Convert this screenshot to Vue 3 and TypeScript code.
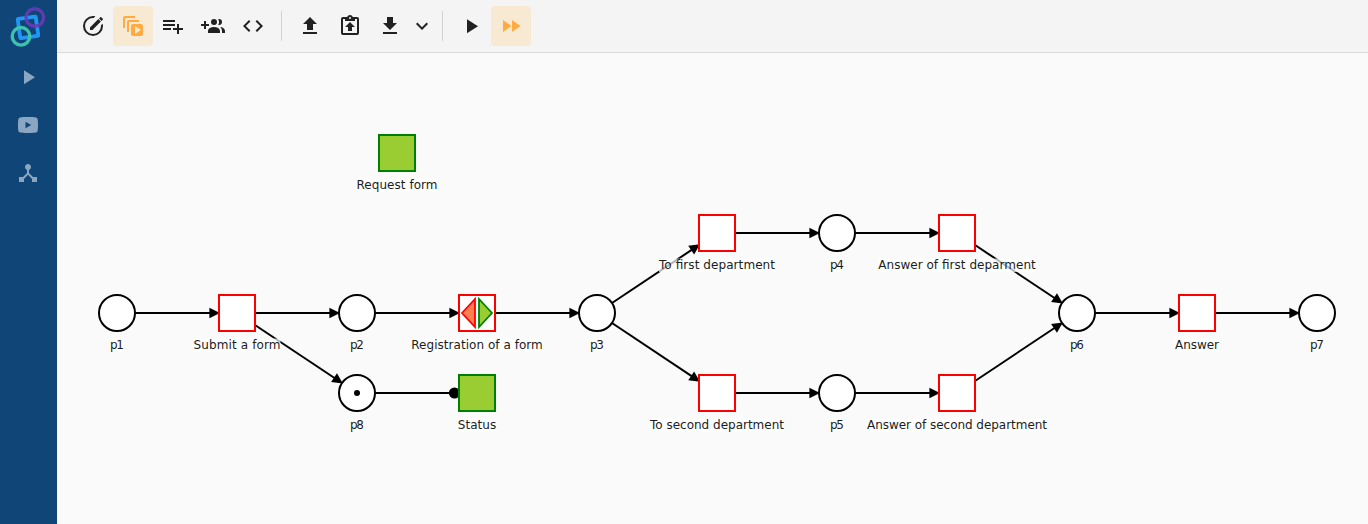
<script setup lang="ts">
type Kind = 'place' | 'transition' | 'form'

interface NetNode {
  id: string
  kind: Kind
  x: number
  y: number
  label: string
  width: number
  token?: boolean
  gate?: boolean
}

interface Arc {
  from: string
  to: string
  dot?: boolean
}

interface Tool {
  name: string
  path: string
  active?: boolean
  narrow?: boolean
}

const playPath = 'M8,5.14V19.14L19,12.14Z'

const menu: Tool[] = [
  { name: 'Run', path: playPath },
  {
    name: 'Videos',
    path: 'M12,4C16,4 18.6,4.1 19.9,4.45C21,4.75 21.5,5.4 21.7,6.5C21.9,7.8 22,9.8 22,12C22,14.2 21.9,16.2 21.7,17.5C21.5,18.6 21,19.25 19.9,19.55C18.6,19.9 16,20 12,20C8,20 5.4,19.9 4.1,19.55C3,19.25 2.5,18.6 2.3,17.5C2.1,16.2 2,14.2 2,12C2,9.8 2.1,7.8 2.3,6.5C2.5,5.4 3,4.75 4.1,4.45C5.4,4.1 8,4 12,4ZM9.5,8.8V15.2L15.2,12Z',
  },
  {
    name: 'Network',
    path: 'M17 16l-4-4V8.82C14.16 8.4 15 7.3 15 6c0-1.66-1.34-3-3-3S9 4.34 9 6c0 1.3.84 2.4 2 2.82V12l-4 4H3v5h5v-3.05l4-4.2 4 4.2V21h5v-5h-4z',
  },
]

const toolGroups: Tool[][] = [
  [
    {
      name: 'Edit',
      path: 'M12,20A8,8 0 0,0 20,12C20,11.76 20,11.5 19.97,11.28L21.6,9.65C21.87,10.4 22,11.19 22,12A10,10 0 1,1 12,2C12.81,2 13.6,2.13 14.35,2.4L12.72,4.03C12.5,4 12.24,4 12,4A8,8 0 0,0 12,20M19.78,3C19.61,3 19.42,3.07 19.28,3.2L18.06,4.41L20.57,6.9L21.78,5.7C22.04,5.44 22.04,5 21.78,4.75L20.25,3.2C20.11,3.07 19.95,3 19.78,3M17.35,5.12L9,13.5V16H11.5L19.87,7.62Z',
    },
    {
      name: 'Simulate',
      active: true,
      path: 'M4,2C2.89,2 2,2.89 2,4V14H4V4H14V2H4M8,6C6.89,6 6,6.89 6,8V18H8V8H18V6H8M12,10C10.89,10 10,10.89 10,12V20C10,21.1 10.9,22 12,22H20A2,2 0 0,0 22,20V12A2,2 0 0,0 20,10H12M14,12V20L20,16Z',
    },
    {
      name: 'Add to list',
      path: 'M2,16H10V14H2M18,14V10H16V14H12V16H16V20H18V16H22V14M14,6H2V8H14M14,10H2V12H14V10Z',
    },
    {
      name: 'Add roles',
      path: 'M19,17V19H7V17S7,13 13,13 19,17 19,17M16,8A3,3 0 1,0 13,11A3,3 0 0,0 16,8M19.2,13.06A5.6,5.6 0 0,1 21,17V19H24V17S24,13.55 19.2,13.06M18,5A2.91,2.91 0 0,0 17.11,5.14A5,5 0 0,1 17.11,10.86A2.91,2.91 0 0,0 18,11A3,3 0 0,0 18,5M8,10H5V7H3V10H0V12H3V15H5V12H8Z',
    },
    {
      name: 'Code',
      path: 'M14.6,16.6L19.2,12L14.6,7.4L16,6L22,12L16,18L14.6,16.6M9.4,16.6L4.8,12L9.4,7.4L8,6L2,12L8,18L9.4,16.6Z',
    },
  ],
  [
    { name: 'Upload', path: 'M9,16V10H5L12,3L19,10H15V16H9M5,20V18H19V20H5Z' },
    {
      name: 'Paste',
      path: 'M19,3H14.82C14.4,1.84 13.3,1 12,1C10.7,1 9.6,1.84 9.18,3H5A2,2 0 0,0 3,5V19A2,2 0 0,0 5,21H19A2,2 0 0,0 21,19V5A2,2 0 0,0 19,3M12,3A1,1 0 0,0 12,5A1,1 0 0,0 12,3M7,7H17V5H19V19H5V5H7V7M12,8L7,13H10V17H14V13H17L12,8Z',
    },
    { name: 'Download', path: 'M5,20H19V18H5M19,9H15V3H9V9H5L12,16L19,9Z' },
    {
      name: 'More',
      narrow: true,
      path: 'M7.41,8.58L12,13.17L16.59,8.58L18,10L12,16L6,10L7.41,8.58Z',
    },
  ],
  [
    { name: 'Play', path: playPath },
    { name: 'Fast forward', active: true, path: 'M13,6V18L21.5,12M4,18L12.5,12L4,6V18Z' },
  ],
]

const nodes: NetNode[] = [
  { id: 'request', kind: 'form', x: 397, y: 153, label: 'Request form', width: 81 },
  { id: 'p1', kind: 'place', x: 117, y: 313, label: 'p1', width: 14 },
  { id: 'submit', kind: 'transition', x: 237, y: 313, label: 'Submit a form', width: 87 },
  { id: 'p2', kind: 'place', x: 357, y: 313, label: 'p2', width: 14 },
  { id: 'reg', kind: 'transition', x: 477, y: 313, label: 'Registration of a form', width: 131.5, gate: true },
  { id: 'p3', kind: 'place', x: 597, y: 313, label: 'p3', width: 14 },
  { id: 'first', kind: 'transition', x: 717, y: 233, label: 'To first department', width: 116 },
  { id: 'p4', kind: 'place', x: 837, y: 233, label: 'p4', width: 14 },
  { id: 'ansFirst', kind: 'transition', x: 957, y: 233, label: 'Answer of first deparment', width: 157.5 },
  { id: 'second', kind: 'transition', x: 717, y: 393, label: 'To second department', width: 134 },
  { id: 'p5', kind: 'place', x: 837, y: 393, label: 'p5', width: 14 },
  { id: 'ansSecond', kind: 'transition', x: 957, y: 393, label: 'Answer of second department', width: 180 },
  { id: 'p6', kind: 'place', x: 1077, y: 313, label: 'p6', width: 14 },
  { id: 'answer', kind: 'transition', x: 1197, y: 313, label: 'Answer', width: 44 },
  { id: 'p7', kind: 'place', x: 1317, y: 313, label: 'p7', width: 14 },
  { id: 'p8', kind: 'place', x: 357, y: 393, label: 'p8', width: 14, token: true },
  { id: 'status', kind: 'form', x: 477, y: 393, label: 'Status', width: 38.5 },
]

const arcs: Arc[] = [
  { from: 'p1', to: 'submit' },
  { from: 'submit', to: 'p2' },
  { from: 'submit', to: 'p8' },
  { from: 'p2', to: 'reg' },
  { from: 'reg', to: 'p3' },
  { from: 'p8', to: 'status', dot: true },
  { from: 'p3', to: 'first' },
  { from: 'p3', to: 'second' },
  { from: 'first', to: 'p4' },
  { from: 'p4', to: 'ansFirst' },
  { from: 'second', to: 'p5' },
  { from: 'p5', to: 'ansSecond' },
  { from: 'ansFirst', to: 'p6' },
  { from: 'ansSecond', to: 'p6' },
  { from: 'p6', to: 'answer' },
  { from: 'answer', to: 'p7' },
]

const byId = new Map(nodes.map((n) => [n.id, n]))

// Each arc runs centre to centre; its head stops at the border of the target shape.
const drawn = arcs.map((arc) => {
  const a = byId.get(arc.from)!
  const b = byId.get(arc.to)!
  const dx = b.x - a.x
  const dy = b.y - a.y
  const len = Math.hypot(dx, dy)
  const ux = dx / len
  const uy = dy / len
  const reach = b.kind === 'place' ? 17 : 17 / Math.max(Math.abs(ux), Math.abs(uy))
  const tx = b.x - ux * reach
  const ty = b.y - uy * reach
  const ex = tx - ux * 10.6
  const ey = ty - uy * 10.6
  const head = `${tx},${ty} ${ex - uy * 5.3},${ey + ux * 5.3} ${ex + uy * 5.3},${ey - ux * 5.3}`
  return { key: `${arc.from}-${arc.to}`, x1: a.x, y1: a.y, x2: ex + ux, y2: ey + uy, tx, ty, head, dot: arc.dot }
})
</script>

<template>
  <div class="app">
    <nav class="sidebar">
      <svg class="logo" width="40" height="44" viewBox="8 5 40 44" fill="none">
        <rect x="18.9" y="17.7" width="18.2" height="19.4" rx="0.8" transform="rotate(-8 28 27.4)" stroke="#2196f3" stroke-width="3.8" />
        <circle cx="34.8" cy="17.5" r="8.8" stroke="#673ab7" stroke-opacity="0.9" stroke-width="3.4" />
        <circle cx="21" cy="36.3" r="8.8" stroke="#3fc1b0" stroke-width="3.4" />
      </svg>
      <button v-for="item in menu" :key="item.name" class="menu-item" :aria-label="item.name">
        <svg width="24" height="24" viewBox="0 0 24 24"><path :d="item.path" fill-rule="evenodd" /></svg>
      </button>
    </nav>
    <main class="workspace">
      <header class="toolbar">
        <div v-for="(group, i) in toolGroups" :key="i" class="group">
          <button
            v-for="tool in group"
            :key="tool.name"
            class="tool"
            :class="{ active: tool.active, narrow: tool.narrow }"
            :aria-label="tool.name"
          >
            <svg width="24" height="24" viewBox="0 0 24 24"><path :d="tool.path" fill-rule="evenodd" /></svg>
          </button>
        </div>
      </header>
      <svg class="canvas" width="1311" height="471" viewBox="57 53 1311 471">
        <g v-for="arc in drawn" :key="arc.key">
          <line :x1="arc.x1" :y1="arc.y1" :x2="arc.x2" :y2="arc.y2" class="arc" />
          <circle v-if="arc.dot" :cx="arc.tx - 5.5" :cy="arc.ty" r="5.6" />
          <polygon v-else :points="arc.head" />
        </g>
        <g v-for="node in nodes" :key="node.id">
          <circle v-if="node.kind === 'place'" :cx="node.x" :cy="node.y" r="18" class="place" />
          <rect v-else :x="node.x - 18" :y="node.y - 18" width="36" height="36" :class="node.kind" />
          <circle v-if="node.token" :cx="node.x" :cy="node.y" r="3" />
          <g v-if="node.gate" :transform="`translate(${node.x} ${node.y})`">
            <polygon points="-15,0 -2,-14 -2,14" class="gate-in" />
            <polygon points="15,0 2,-14 2,14" class="gate-out" />
          </g>
        </g>
        <g v-for="node in nodes" :key="node.id">
          <rect :x="node.x - node.width / 2" :y="node.y + 25.5" :width="node.width" height="13.5" class="label-bg" />
          <text
            :x="node.x - node.width / 2"
            :y="node.y + 36"
            :textLength="node.width"
            class="label"
          >{{ node.label }}</text>
        </g>
      </svg>
    </main>
  </div>
</template>

<style>
body {
  margin: 0;
  overflow: hidden;
}
</style>

<style scoped>
.app {
  display: flex;
  width: 1368px;
  height: 524px;
  background: #fafafa;
  font-family: Verdana, 'DejaVu Sans', sans-serif;
}

.sidebar {
  box-sizing: border-box;
  display: flex;
  flex-direction: column;
  align-items: center;
  width: 57px;
  padding: 5px 1px 0 0;
  background: #0f4577;
}

.logo {
  margin-bottom: 4px;
}

button {
  display: flex;
  align-items: center;
  justify-content: center;
  padding: 0;
  border: 0;
  background: none;
}

.menu-item {
  width: 48px;
  height: 48px;
  fill: #8ba6c0;
}

.workspace {
  display: flex;
  flex: 1;
  flex-direction: column;
}

.toolbar {
  box-sizing: border-box;
  display: flex;
  align-items: center;
  height: 53px;
  padding-left: 16px;
  border-bottom: 1px solid #dadada;
  background: #f4f4f4;
}

.group {
  display: flex;
}

.group + .group::before {
  content: '';
  align-self: center;
  width: 1px;
  height: 30px;
  margin: 0 8px;
  background: #d2d2d2;
}

.tool {
  width: 40px;
  height: 40px;
  border-radius: 4px;
  fill: #212121;
}

.tool.narrow {
  width: 24px;
}

.tool.active {
  background: #f8e9d2;
  fill: #ffab40;
}

.canvas {
  display: block;
}

.arc {
  stroke: #000;
  stroke-width: 2;
}

.place {
  fill: #fff;
  stroke: #000;
  stroke-width: 2;
}

.transition {
  fill: #fff;
  stroke: #f00;
  stroke-width: 2;
}

.form {
  fill: #9acd32;
  stroke: #008000;
  stroke-width: 2;
}

.gate-in {
  fill: #ff7f50;
  stroke: #f00;
  stroke-width: 1.8;
}

.gate-out {
  fill: #9acd32;
  stroke: #008000;
  stroke-width: 1.8;
}

.label-bg {
  fill: #fff;
  fill-opacity: 0.7;
}

.label {
  fill: #1c1c1c;
  font-size: 12px;
}
</style>
